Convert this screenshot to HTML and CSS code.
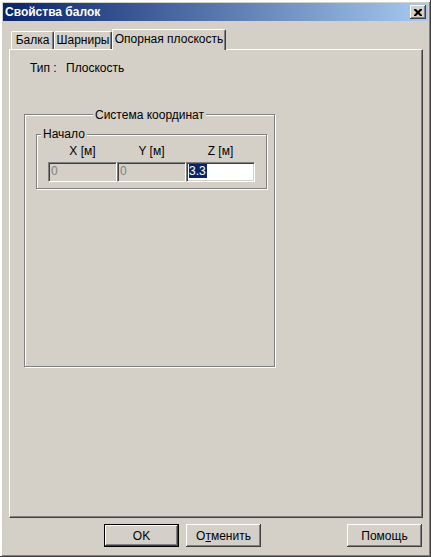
FILE: index.html
```html
<!DOCTYPE html>
<html lang="ru">
<head>
    <meta charset="UTF-8">
    <title>Свойства балок</title>
    <link rel="stylesheet" href="styles.css">
</head>
<body>
    <div class="window">
        <div class="titlebar">
            <span class="title">Свойства балок</span>
            <div class="close">
                <svg width="8" height="7" viewBox="0 0 8 7">
                    <path d="M0 0h2l2 2 2-2h2v1l-2.5 2.5 2.5 2.5v1h-2l-2-2-2 2h-2v-1l2.5-2.5-2.5-2.5z" fill="#000"/>
                </svg>
            </div>
        </div>

        <div class="client">
            <div class="tabs">
                <div class="tab tab-beam">Балка</div>
                <div class="tab tab-hinge">Шарниры</div>
                <div class="tab active">Опорная плоскость</div>
            </div>

            <div class="page">
                <div class="type-row">
                    <span class="type-label">Тип :</span>
                    <span>Плоскость</span>
                </div>

                <div class="group coord">
                    <div class="caption">Система координат</div>
                    <div class="group origin">
                        <div class="caption caption-left">Начало</div>
                        <div class="fields">
                            <div class="field">
                                <div class="field-label">X [м]</div>
                                <div class="edit disabled">0</div>
                            </div>
                            <div class="field">
                                <div class="field-label">Y [м]</div>
                                <div class="edit disabled">0</div>
                            </div>
                            <div class="field">
                                <div class="field-label">Z [м]</div>
                                <div class="edit"><span class="selected">3.3</span></div>
                            </div>
                        </div>
                    </div>
                </div>
            </div>

            <div class="buttons">
                <div class="btn default"><span>OK</span></div>
                <div class="btn">О<u>т</u>менить</div>
                <div class="btn help">Помощь</div>
            </div>
        </div>
    </div>
</body>
</html>
```

FILE: styles.css
```css
body {
    margin: 0;
    background: #d4d0c8;
    font-family: 'Liberation Sans', Arial, sans-serif;
    font-size: 12px;
    line-height: 14px;
    color: #000;
}
.window {
    width: 431px;
    height: 557px;
    box-sizing: border-box;
    padding: 3px;
    background: #d4d0c8;
    box-shadow: inset -1px -1px #404040, inset 2px 2px #fff, inset -2px -2px #808080;
}
.titlebar {
    height: 18px;
    display: flex;
    align-items: center;
    justify-content: space-between;
    padding: 0 2px;
    background: linear-gradient(to right, #0a246a, #a6caf0);
}
.title {
    color: #fff;
    font-weight: bold;
}
.close {
    width: 16px;
    height: 14px;
    box-sizing: border-box;
    display: flex;
    align-items: center;
    justify-content: center;
    background: #d4d0c8;
    box-shadow: inset -1px -1px #404040, inset 1px 1px #fff, inset -2px -2px #808080;
}
.client {
    padding: 8px 5px 0 6px;
}
.tabs {
    height: 20px;
    display: flex;
    align-items: flex-end;
    padding-left: 2px;
}
.tab {
    height: 18px;
    box-sizing: border-box;
    border-top: 1px solid #fff;
    border-left: 1px solid #fff;
    border-right: 1px solid #404040;
    border-radius: 2px 2px 0 0;
    box-shadow: inset -1px 0 #808080;
    text-align: center;
    line-height: 16px;
}
.tab-beam {
    width: 43px;
}
.tab-hinge {
    width: 58px;
}
.tab.active {
    width: 114px;
    height: 21px;
    margin-bottom: -1px;
    position: relative;
    background: #d4d0c8;
    line-height: 18px;
}
.page {
    width: 414px;
    height: 469px;
    box-sizing: border-box;
    border-top: 1px solid #fff;
    border-left: 1px solid #fff;
    border-right: 1px solid #404040;
    border-bottom: 1px solid #404040;
    box-shadow: inset -1px -1px #808080;
}
.type-row {
    display: flex;
    margin: 11px 0 0 20px;
}
.type-label {
    width: 36px;
}
.group {
    box-sizing: border-box;
    border: 1px solid #808080;
    box-shadow: inset 1px 1px #fff, 1px 1px #fff;
}
.coord {
    width: 251px;
    height: 253px;
    margin: 39px 0 0 14px;
}
.caption {
    width: fit-content;
    margin: -7px auto 0;
    padding: 0 2px;
    background: #d4d0c8;
}
.origin {
    margin: 12px 7px 0 11px;
    padding: 0 0 6px 11px;
}
.caption-left {
    margin: -8px 0 0 -7px;
}
.fields {
    display: flex;
    margin-top: 3px;
}
.field {
    width: 69px;
}
.field-label {
    text-align: center;
    margin-bottom: 4px;
}
.edit {
    height: 20px;
    box-sizing: border-box;
    border: 1px solid;
    border-color: #808080 #fff #fff #808080;
    box-shadow: inset 1px 1px #404040, inset -1px -1px #d4d0c8;
    background: #fff;
    padding: 1px 0 0 2px;
    line-height: 15px;
}
.edit.disabled {
    background: #d4d0c8;
    color: #808080;
}
.selected {
    background: #0a246a;
    color: #fff;
    padding: 0 1px 0 0;
}
.buttons {
    display: flex;
    gap: 7px;
    margin-top: 6px;
    padding: 0 1px 0 95px;
}
.btn {
    width: 75px;
    height: 23px;
    box-sizing: border-box;
    display: flex;
    align-items: center;
    justify-content: center;
    box-shadow: inset -1px -1px #404040, inset 1px 1px #fff, inset -2px -2px #808080;
}
.btn.default {
    border: 1px solid #000;
}
.btn u {
    text-decoration-thickness: 1px;
}
.help {
    margin-left: auto;
}
```
